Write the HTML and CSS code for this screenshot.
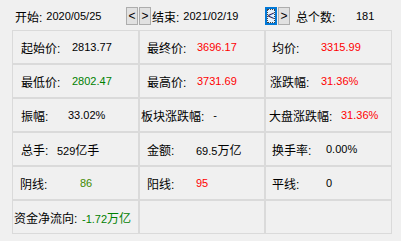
FILE: index.html
```html
<!DOCTYPE html>
<html lang="zh-CN">
<head>
    <meta charset="UTF-8">
    <title>区间统计</title>
    <link rel="stylesheet" href="styles.css">
</head>
<body>
    <div class="bar">
        <span class="field f1">开始:<span class="date">2020/05/25</span></span>
        <span class="btns">
            <button class="btn">&lt;</button>
            <button class="btn">&gt;</button>
        </span>
        <span class="field f2">结束:<span class="date">2021/02/19</span></span>
        <span class="btns">
            <button class="btn focus">&lt;</button>
            <button class="btn">&gt;</button>
        </span>
        <span class="total">总个数:</span><span class="v">181</span>
    </div>

    <div class="grid">
        <div class="cell p9"><span class="lb w51">起始价:</span><span class="v">2813.77</span></div>
        <div class="cell p8"><span class="lb w50">最终价:</span><span class="v red">3696.17</span></div>
        <div class="cell p7"><span class="lb w49">均价:</span><span class="v red">3315.99</span></div>

        <div class="cell p9"><span class="lb w51">最低价:</span><span class="v green">2802.47</span></div>
        <div class="cell p8"><span class="lb w50">最高价:</span><span class="v red">3731.69</span></div>
        <div class="cell p5"><span class="lb w51">涨跌幅:</span><span class="v red">31.36%</span></div>

        <div class="cell p9"><span class="lb w47">振幅:</span><span class="v">33.02%</span></div>
        <div class="cell p2"><span class="lb">板块涨跌幅:</span><span class="v dash">-</span></div>
        <div class="cell p4"><span class="lb w72">大盘涨跌幅:</span><span class="v red">31.36%</span></div>
    </div>

    <div class="grid">
        <div class="cell p9"><span class="lb w36">总手:</span><span class="v">529<span class="cn">亿手</span></span></div>
        <div class="cell p8"><span class="lb w49">金额:</span><span class="v">69.5<span class="cn">万亿</span></span></div>
        <div class="cell p7"><span class="lb w54">换手率:</span><span class="v">0.00%</span></div>

        <div class="cell p8"><span class="lb w60">阴线:</span><span class="v olive">86</span></div>
        <div class="cell p8"><span class="lb w49">阳线:</span><span class="v red">95</span></div>
        <div class="cell p7"><span class="lb w54">平线:</span><span class="v">0</span></div>

        <div class="cell p2"><span class="lb w68">资金净流向:</span><span class="v green">-1.72<span class="cn">万亿</span></span></div>
        <div class="cell"></div>
        <div class="cell"></div>
    </div>
</body>
</html>
```

FILE: styles.css
```css
body {
    margin: 0;
    background-color: #f0f0f0;
    color: #000;
    font-family: "Liberation Sans", "Noto Sans CJK SC", sans-serif;
    font-size: 12px;
    width: 401px;
    height: 241px;
    overflow: hidden;
}

/* top bar */
.bar {
    display: flex;
    align-items: center;
    height: 18px;
    margin-top: 7px;
    padding-left: 15px;
    white-space: nowrap;
}
.field {
    display: flex;
    align-items: center;
}
.f1 {
    width: 111px;
}
.f2 {
    width: 113px;
    margin-left: 1px;
}
.date {
    font-size: 11px;
    margin-left: 4px;
}
.btns {
    display: flex;
    gap: 1px;
    height: 18px;
}
.btn {
    width: 12px;
    height: 18px;
    padding: 0;
    margin: 0;
    border: 1px solid #adadad;
    background-color: #e1e1e1;
    font-family: "Liberation Sans", sans-serif;
    font-size: 12px;
    line-height: 14px;
    color: #000;
}
.btn.focus {
    border: 1px solid #0078d7;
    box-shadow: inset 0 0 0 1px #0078d7;
    background-color: #e5f1fb;
    outline: 1px dotted #444;
    outline-offset: -3px;
    color: #1a1a5a;
}
.total {
    margin-left: 6px;
    width: 60px;
}

/* stat grids */
.grid {
    display: grid;
    grid-template-columns: 127px 126px 127px;
    grid-auto-rows: 34px;
    margin-left: 12px;
}
.bar + .grid {
    margin-top: 5px;
}
.cell {
    display: flex;
    align-items: center;
    border: 1px solid #dadada;
    white-space: nowrap;
    overflow: hidden;
}
.lb {
    flex: none;
}
.v {
    font-size: 11px;
}
.v .cn {
    font-size: 12px;
}
.dash {
    margin-left: 9px;
}

.p2 { padding-left: 1px; }
.p4 { padding-left: 3px; }
.p5 { padding-left: 4px; }
.p7 { padding-left: 6px; }
.p8 { padding-left: 7px; }
.p9 { padding-left: 8px; }

.w36 { width: 36px; }
.w47 { width: 47px; }
.w49 { width: 49px; }
.w50 { width: 50px; }
.w51 { width: 51px; }
.w54 { width: 54px; }
.w60 { width: 60px; }
.w68 { width: 68px; }
.w72 { width: 72px; }

.red { color: #ff0000; }
.green { color: #008000; }
.olive { color: #3f8a00; }
```
